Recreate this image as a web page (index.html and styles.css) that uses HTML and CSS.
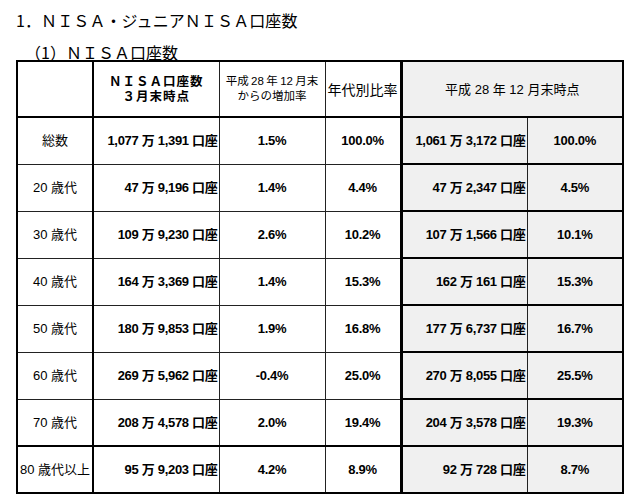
FILE: index.html
```html
<!DOCTYPE html>
<html lang="ja">
<head>
<meta charset="utf-8">
<link rel="stylesheet" href="styles.css">
</head>
<body>
<h1 class="title">1．ＮＩＳＡ・ジュニアＮＩＳＡ口座数</h1>
<h2 class="subtitle">（1）ＮＩＳＡ口座数</h2>
<table class="stats">
  <colgroup>
    <col class="c-age"><col class="c-num"><col class="c-inc"><col class="c-ratio"><col class="c-num2"><col class="c-ratio2">
  </colgroup>
  <thead>
    <tr class="head">
      <th class="age"></th>
      <th class="main-h">ＮＩＳＡ口座数<br>３月末時点</th>
      <th class="inc-h">平成 28 年 12 月末<br>からの増加率</th>
      <th class="ratio-h">年代別比率</th>
      <th class="prev-h" colspan="2">平成 28 年 12 月末時点</th>
    </tr>
  </thead>
  <tbody>
    <tr><td class="age">総数</td><td class="num">1,077 万 1,391 口座</td><td class="pct">1.5%</td><td class="pct">100.0%</td><td class="num prev first">1,061 万 3,172 口座</td><td class="pct prev last">100.0%</td></tr>
    <tr><td class="age">20 歳代</td><td class="num">47 万 9,196 口座</td><td class="pct">1.4%</td><td class="pct">4.4%</td><td class="num prev first">47 万 2,347 口座</td><td class="pct prev last">4.5%</td></tr>
    <tr><td class="age">30 歳代</td><td class="num">109 万 9,230 口座</td><td class="pct">2.6%</td><td class="pct">10.2%</td><td class="num prev first">107 万 1,566 口座</td><td class="pct prev last">10.1%</td></tr>
    <tr><td class="age">40 歳代</td><td class="num">164 万 3,369 口座</td><td class="pct">1.4%</td><td class="pct">15.3%</td><td class="num prev first">162 万 161 口座</td><td class="pct prev last">15.3%</td></tr>
    <tr><td class="age">50 歳代</td><td class="num">180 万 9,853 口座</td><td class="pct">1.9%</td><td class="pct">16.8%</td><td class="num prev first">177 万 6,737 口座</td><td class="pct prev last">16.7%</td></tr>
    <tr><td class="age">60 歳代</td><td class="num">269 万 5,962 口座</td><td class="pct">-0.4%</td><td class="pct">25.0%</td><td class="num prev first">270 万 8,055 口座</td><td class="pct prev last">25.5%</td></tr>
    <tr><td class="age">70 歳代</td><td class="num">208 万 4,578 口座</td><td class="pct">2.0%</td><td class="pct">19.4%</td><td class="num prev first">204 万 3,578 口座</td><td class="pct prev last">19.3%</td></tr>
    <tr class="final"><td class="age">80 歳代以上</td><td class="num">95 万 9,203 口座</td><td class="pct">4.2%</td><td class="pct">8.9%</td><td class="num prev first">92 万 728 口座</td><td class="pct prev last">8.7%</td></tr>
  </tbody>
</table>
</body>
</html>
```

FILE: styles.css
```css
html, body {
  margin: 0;
  padding: 0;
  background: #ffffff;
  color: #000000;
  font-family: "Noto Sans CJK JP", sans-serif;
}

body {
  padding: 10px 0 0 16px;
}

.title {
  margin: 0;
  font-size: 16px;
  font-weight: normal;
  line-height: 20px;
  height: 20px;
  letter-spacing: 0.1px;
}

.subtitle {
  margin: 12px 0 0 0;
  font-size: 16px;
  font-weight: normal;
  line-height: 20px;
  height: 18px;
  padding-left: 9px;
}

.stats {
  border-collapse: collapse;
  table-layout: fixed;
  width: 606px;
  border: 2px solid #000;
  font-family: "Liberation Sans", "Noto Sans CJK JP", sans-serif;
  font-size: 13px;
}

.c-age { width: 76px; }
.c-num { width: 126px; }
.c-inc { width: 106px; }
.c-ratio { width: 76px; }
.c-num2 { width: 126px; }
.c-ratio2 { width: 96px; }

.stats th,
.stats td {
  border: 1px solid #222;
  padding: 0;
  text-align: center;
  vertical-align: middle;
  line-height: 15px;
}

.stats .head th {
  height: 52px;
  border-bottom: 2px solid #000;
}

.stats th.age,
.stats td.age {
  border-right: 2px solid #000;
}

.main-h {
  font-family: "Liberation Sans", "Noto Sans CJK JP", sans-serif;
  font-weight: bold;
  font-size: 12.5px;
  line-height: 14px;
  letter-spacing: 1px;
  padding-top: 2px !important;
}

.inc-h {
  font-weight: normal;
  font-size: 11.5px;
  line-height: 16px;
  word-spacing: -0.8px;
  font-family: "Liberation Sans", "Noto Sans CJK JP", sans-serif;
}

.ratio-h {
  font-weight: normal;
  font-size: 14px;
  font-family: "Noto Sans CJK JP", sans-serif;
}

.prev-h {
  font-weight: normal;
  font-size: 13px;
  background: #f0f0f0;
  border-left: 3px solid #000 !important;
  border-right: 2px solid #000;
  border-top: 2px solid #000;
}

.stats td {
  height: 45px;
}

.stats td.age {
  font-weight: normal;
  font-size: 13px;
  white-space: nowrap;
}

.stats td.num {
  font-weight: bold;
  text-align: right;
  letter-spacing: -0.3px;
  padding-right: 1px;
  white-space: nowrap;
}

.stats td.pct {
  font-weight: bold;
  letter-spacing: -0.3px;
}

.stats td.prev {
  background: #f0f0f0;
  border-top: 2px solid #000;
  border-bottom: 2px solid #000;
}

.stats td.first {
  border-left: 3px solid #000;
}

.stats td.last {
  border-right: 2px solid #000;
}

.stats tr.final td {
  border-top: 2px solid #000;
  border-bottom: 2px solid #000;
}
```
